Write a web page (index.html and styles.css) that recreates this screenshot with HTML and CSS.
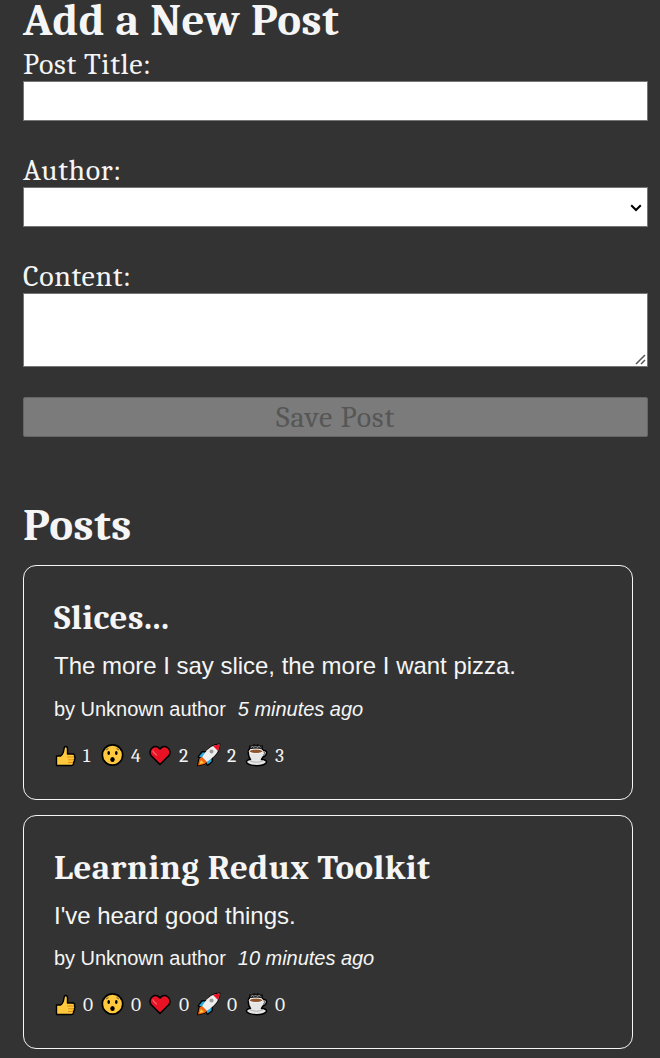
FILE: index.html
```html
<!DOCTYPE html>
<html lang="en">
<head>
<meta charset="utf-8">
<title>Posts</title>
<link rel="stylesheet" href="styles.css">
</head>
<body>
<svg class="sprites" aria-hidden="true">
  <symbol id="thumb" viewBox="0 0 24 24"><path d="M3.500 13h4c2-1 3-3 3.500-7C11.300 2.500 14.500 3 14.500 6v5h5c2 0 2.500 1.500 2 2.800.8 1 .7 2-.2 2.800.6 1 .2 2-.7 2.600.2 2-.6 3.300-2.500 3.300H3.500z" fill="#ffc83d" stroke="#000" stroke-width="1.400" stroke-linejoin="round"/><path d="M14 14h7M15 16.800h6M15 19.500h5" stroke="#d67d00" stroke-width=".8"/></symbol>
  <symbol id="wow" viewBox="0 0 24 24"><circle cx="11.500" cy="12" r="10.200" fill="#ffc83d" stroke="#000" stroke-width="1.700"/><ellipse cx="7.700" cy="10" rx="1.300" ry="2"/><ellipse cx="15.300" cy="10" rx="1.300" ry="2"/><ellipse cx="11.500" cy="16.500" rx="2.200" ry="2.600"/><path d="M5 7l2.500-1.500M15.500 5.500L18 7" stroke="#222" stroke-width=".7"/></symbol>
  <symbol id="heart" viewBox="0 0 24 24"><path d="M11 21.500L2 12.500C-1.500 7 6-.5 11 6c5-6.500 12.500 1 9 6.500z" fill="#e81224" stroke="#000" stroke-width="1.600" stroke-linejoin="round"/><path d="M4 8q.5 2 3.500 4" fill="none" stroke="#f4606c" stroke-width="1.300" stroke-linecap="round"/></symbol>
  <symbol id="rocket" viewBox="0 0 24 24"><path d="M1 22.500l1-6 2-2-2.500-.5L5 9h5c3-5 7-7.500 12.500-7.500C22.500 7 20 11 15 14.500v4L10.500 22l-1.300-3L7 21z" stroke="#000" stroke-width="1.800" stroke-linejoin="round"/><path d="M2 13.500L5.500 9.500h5L5 15zM14.500 14v4.500L10.500 21.500 9 18z" fill="#29a9df"/><path d="M5 14.500C9 7 14 2 22.500 1.500 22 10 17 14 9.500 19z" fill="#eee"/><path d="M16 3q3-1.500 6.500-1.500 0 3.500-1.500 6.500z" fill="#e81224"/><path d="M1 22.500l1.500-7L5 14l5 5-2.500 2z" fill="#f7630c"/><path d="M2.500 21l1.500-4 3 3z" fill="#ffc83d"/><circle cx="14.500" cy="8.500" r="2" fill="#999"/></symbol>
  <symbol id="cup" viewBox="0 0 24 24"><path d="M4.500 6l.5-3 2 .5L9 2l2 1 2-1 2 1.500L17 3v3l1.500 1.500c4.500-.5 4 5-.5 6.500l-1.500 2.500c4 0 6 2 4.500 3.500-3 3.500-15.500 3.500-19 0-1.500-2 1-3.500 3.500-3.500C3.500 14 3 10.500 3.500 7.500z" fill="#e6e6e6" stroke="#000" stroke-width="1.500" stroke-linejoin="round"/><path d="M5 2.500h12v3.500H5z" fill="#222"/><path d="M6 4.500l1.500-1 1.500 1 1.500-1.500 1.500 1.500 2-1 1.500 1" fill="none" stroke="#aaa" stroke-width=".9"/><path d="M18.500 9c2 .2 1.500 2.500-.5 3.500" fill="none" stroke="#222" stroke-width=".8"/><ellipse cx="11" cy="8.300" rx="6.800" ry="2.200" fill="#8e562e" stroke="#fff" stroke-width=".9"/><path d="M4.500 17.500q7 3.500 14 0" fill="none" stroke="#aaa" stroke-width=".9"/></symbol>
</svg>
<main>
  <section class="compose">
    <h1>Add a New Post</h1>
    <form>
      <label for="title">Post Title:</label>
      <input id="title" type="text">
      <label for="author">Author:</label>
      <div class="field">
        <select id="author"><option></option></select>
        <svg class="caret" viewBox="0 0 12 8"><path d="M1.200 1.200L6 6l4.800-4.800" fill="none" stroke="#000" stroke-width="2"/></svg>
      </div>
      <label for="content">Content:</label>
      <div class="field">
        <textarea id="content"></textarea>
        <svg class="grip" viewBox="0 0 11 11"><path d="M1 10l9-9M6 10l4-4" fill="none" stroke="#555" stroke-width="1.500"/></svg>
      </div>
      <button type="button" disabled>Save Post</button>
    </form>
  </section>
  <section class="posts">
    <h1>Posts</h1>
    <article>
      <h2>Slices...</h2>
      <p class="excerpt">The more I say slice, the more I want pizza.</p>
      <p class="credit"><span>by Unknown author</span><i>5 minutes ago</i></p>
      <div class="reactions"><span><svg><use href="#thumb"/></svg>1</span><span><svg><use href="#wow"/></svg>4</span><span><svg><use href="#heart"/></svg>2</span><span><svg><use href="#rocket"/></svg>2</span><span><svg><use href="#cup"/></svg>3</span></div>
    </article>
    <article>
      <h2>Learning Redux Toolkit</h2>
      <p class="excerpt">I've heard good things.</p>
      <p class="credit"><span>by Unknown author</span><i>10 minutes ago</i></p>
      <div class="reactions"><span><svg><use href="#thumb"/></svg>0</span><span><svg><use href="#wow"/></svg>0</span><span><svg><use href="#heart"/></svg>0</span><span><svg><use href="#rocket"/></svg>0</span><span><svg><use href="#cup"/></svg>0</span></div>
    </article>
  </section>
</main>
</body>
</html>
```
FILE: styles.css
```css
* { box-sizing: border-box; margin: 0; padding: 0; }
html, body { height: 1058px; overflow: hidden; }
body { background: #333; color: whitesmoke; font-family: Cambria, Caladea, "Noto Serif", "DejaVu Serif Condensed", serif; }
.sprites { display: none; }
main { padding: 0 12px 0 23px; }
h1 { font-size: 45px; letter-spacing: .6px; line-height: 46px; height: 46px; white-space: nowrap; }
.compose h1 { line-height: 40px; }
h2 { font-size: 35px; letter-spacing: .45px; line-height: 42px; height: 40px; white-space: nowrap; }
form { display: flex; flex-direction: column; }
label { font-size: 30px; letter-spacing: .6px; line-height: 38px; height: 35px; }
input, select, textarea { display: block; width: 100%; height: 40px; border: 1px solid #767676; border-radius: 0; background: #fff; font: 26px "Liberation Sans", sans-serif; }
input, .field { margin-bottom: 31px; }
.field { position: relative; }
select { appearance: none; }
textarea { height: 74px; resize: none; margin-bottom: -1px; }
.caret { position: absolute; right: 6px; top: 17px; width: 12px; height: 8px; }
.grip { position: absolute; right: 2px; bottom: 1px; width: 11px; height: 11px; }
button { height: 40px; padding-top: 2px; border: 1px solid #666; border-radius: 2px; background: #7b7b7b; color: #565656; font: 30px/36px Cambria, Caladea, "Noto Serif", "DejaVu Serif Condensed", serif; letter-spacing: .8px; }
.posts { padding-top: 65px; }
.posts h1 { margin-bottom: 17px; }
article { width: 610px; height: 235px; border: 1px solid whitesmoke; border-radius: 13px; padding: 31px 30px 0; margin-bottom: 15px; }
article + article { height: 234px; }
.excerpt { font: 24px/32px "Liberation Sans", Arial, sans-serif; letter-spacing: -.02px; margin-top: 13px; }
.credit { display: flex; gap: 12px; font: 20px/28px "Liberation Sans", Arial, sans-serif; letter-spacing: -.03px; margin-top: 13px; }
article + article .credit { margin: 12px 0 20px; }
.reactions { display: flex; margin: 20px 0 0 -1px; }
article + article .reactions { margin-top: 0; }
.reactions span { display: flex; gap: 6px; width: 48px; font-size: 19.5px; line-height: 26px; height: 24px; }
.reactions svg { width: 24px; height: 24px; flex: none; }
```
